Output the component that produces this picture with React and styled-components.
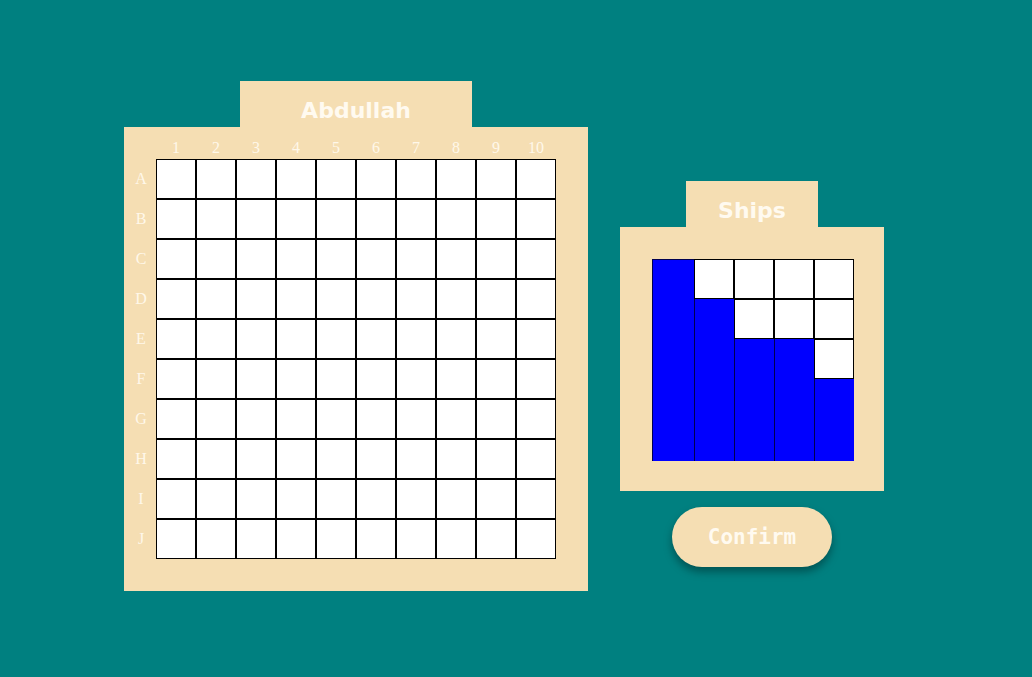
import React from 'react';
import styled, { createGlobalStyle } from 'styled-components';

const ROWS = ['A', 'B', 'C', 'D', 'E', 'F', 'G', 'H', 'I', 'J'];
const COLS = [1, 2, 3, 4, 5, 6, 7, 8, 9, 10];
// ship lengths, one per column of the ships tray
const SHIPS = [5, 4, 3, 3, 2];

const GlobalStyle = createGlobalStyle`
	body {
		margin: 0;
		background-color: #008080;
	}
`;

const Page = styled.div`
	min-height: 677px;
	box-sizing: border-box;
	padding: 81px 0 0 124px;
	display: flex;
	flex-direction: row;
	align-items: flex-start;
	gap: 32px;
`;

const Column = styled.div`
	display: flex;
	flex-direction: column;
	align-items: center;
	margin-top: ${(p) => p.offset || 0}px;
`;

const Tab = styled.div`
	width: ${(p) => p.width}px;
	height: 46px;
	background-color: #f5deb3;
	color: #fffaf0;
	font-family: 'Comic Sans MS', 'DejaVu Sans', sans-serif;
	font-weight: bold;
	font-size: 22px;
	display: flex;
	align-items: center;
	justify-content: center;
	padding-top: 12px;
	box-sizing: border-box;
`;

const Panel = styled.div`
	background-color: #f5deb3;
	padding: ${(p) => p.pad};
	display: grid;
	grid-template-columns: ${(p) => p.cols};
	grid-template-rows: ${(p) => p.rows};
`;

const Label = styled.div`
	display: flex;
	align-items: center;
	justify-content: center;
	padding: ${(p) => (p.top ? '10px 0 0 0' : '0 0 0 2px')};
	font-family: 'Liberation Serif', 'Times New Roman', serif;
	font-size: 16px;
	color: #fff8ea;
`;

const Cell = styled.div`
	width: 40px;
	height: 40px;
	box-sizing: border-box;
	background-color: #fff;
	border: 1px solid #000;
`;

const Tray = styled.div`
	display: flex;
	flex-direction: row;
	width: 202px;
	height: 202px;
`;

const TrayColumn = styled.div`
	display: flex;
	flex-direction: column;
	width: 40px;
	&:first-child {
		width: 42px;
	}
`;

const Ship = styled.div`
	flex: 1;
	background-color: #0000ff;
	border-left: 1px solid #000050;
	&:first-child {
		border-top: 1px solid #000050;
	}
`;

const ConfirmButton = styled.button`
	margin-top: 16px;
	width: 160px;
	height: 60px;
	border: none;
	border-radius: 30px;
	background-color: #f5deb3;
	color: #fffaf0;
	font-family: 'DejaVu Sans Mono', monospace;
	font-weight: bold;
	font-size: 21px;
	box-shadow: 0 5px 8px rgba(0, 0, 0, 0.35);
	cursor: pointer;
`;

const App = () => {
	return (
		<React.Fragment>
			<GlobalStyle />
			<Page>
				<Column>
					<Tab width={232}>Abdullah</Tab>
					<Panel pad="0 32px 32px 0" cols="32px repeat(10, 40px)" rows="32px repeat(10, 40px)">
						<div />
						{COLS.map((c) => (
							<Label key={c} top>
								{c}
							</Label>
						))}
						{ROWS.map((r) => (
							<React.Fragment key={r}>
								<Label>{r}</Label>
								{COLS.map((c) => (
									<Cell key={r + c} />
								))}
							</React.Fragment>
						))}
					</Panel>
				</Column>
				<Column offset={100}>
					<Tab width={132}>Ships</Tab>
					<Panel pad="32px 30px 30px 32px" cols="202px" rows="202px">
						<Tray>
							{SHIPS.map((len, i) => (
								<TrayColumn key={i}>
									{Array.from({ length: 5 - len }).map((_, j) => (
										<Cell key={j} />
									))}
									<Ship />
								</TrayColumn>
							))}
						</Tray>
					</Panel>
					<ConfirmButton>Confirm</ConfirmButton>
				</Column>
			</Page>
		</React.Fragment>
	);
};

export default App;
